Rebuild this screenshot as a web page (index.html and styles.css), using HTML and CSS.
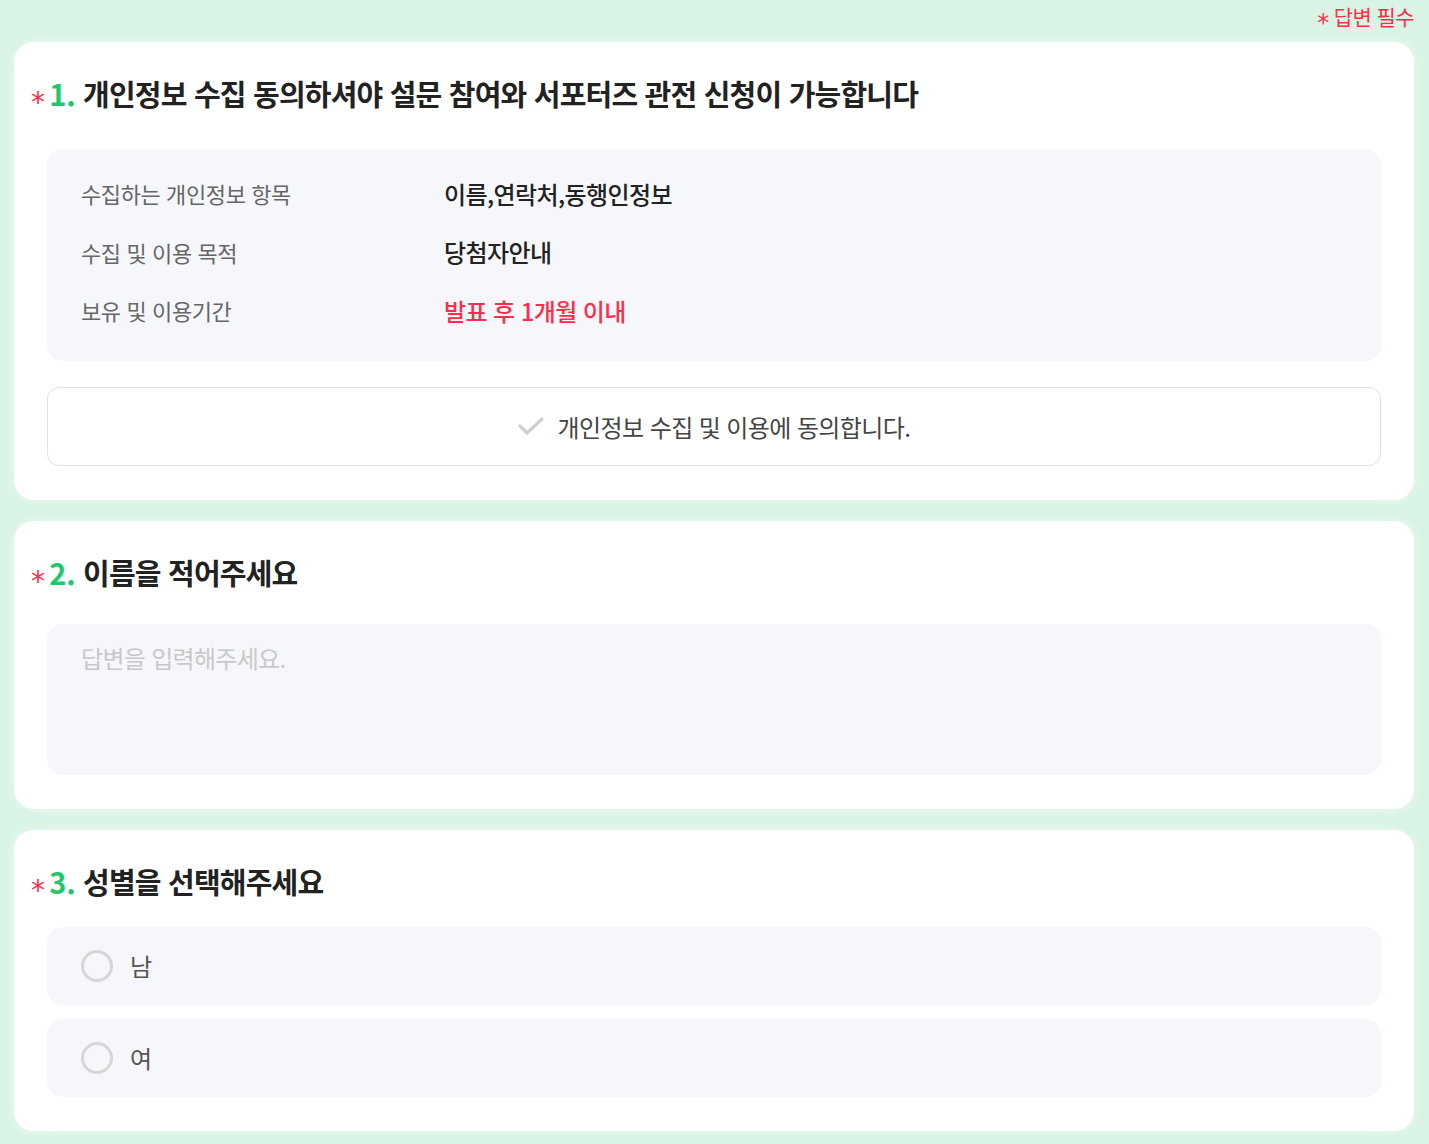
FILE: index.html
```html
<!DOCTYPE html>
<html lang="ko">

<head>
    <meta charset="UTF-8">
    <meta name="viewport" content="width=device-width, initial-scale=1.0">
    <title>설문</title>
    <link rel="stylesheet" href="styles.css">
</head>

<body>
    <div class="survey">
        <div class="required-note"><span class="star">*</span> 답변 필수</div>

        <div class="card">
            <h2 class="q-title q1"><span class="star">*</span><span class="num">1.</span> 개인정보 수집 동의하셔야 설문 참여와 서포터즈 관전 신청이 가능합니다</h2>
            <div class="info-box">
                <div class="info-row">
                    <span class="info-label">수집하는 개인정보 항목</span>
                    <span class="info-value">이름,연락처,동행인정보</span>
                </div>
                <div class="info-row">
                    <span class="info-label">수집 및 이용 목적</span>
                    <span class="info-value">당첨자안내</span>
                </div>
                <div class="info-row">
                    <span class="info-label">보유 및 이용기간</span>
                    <span class="info-value red">발표 후 1개월 이내</span>
                </div>
            </div>
            <button class="agree-btn">
                <svg class="check" width="26" height="20" viewBox="0 0 26 20">
                    <path d="M2 10 L9 17 L24 3" fill="none" stroke="#cfcfcf" stroke-width="3.2" stroke-linecap="round" stroke-linejoin="round"/>
                </svg>
                개인정보 수집 및 이용에 동의합니다.
            </button>
        </div>

        <div class="card">
            <h2 class="q-title q2"><span class="star">*</span><span class="num">2.</span> 이름을 적어주세요</h2>
            <textarea class="answer" placeholder="답변을 입력해주세요."></textarea>
        </div>

        <div class="card">
            <h2 class="q-title q3"><span class="star">*</span><span class="num">3.</span> 성별을 선택해주세요</h2>
            <div class="options">
                <label class="option"><span class="radio"></span>남</label>
                <label class="option"><span class="radio"></span>여</label>
            </div>
        </div>
    </div>
</body>

</html>
```

FILE: styles.css
```css
body {
    margin: 0;
    background-color: #d9f4e5;
    font-family: "Noto Sans CJK KR", "Noto Sans", sans-serif;
    color: #222;
}

.survey {
    padding: 0 15px 13px 14px;
}

.required-note {
    height: 42px;
    text-align: right;
    font-size: 21px;
    line-height: 32px;
    color: #ff2d4b;
    letter-spacing: -0.6px;
}

.star {
    font-family: "DejaVu Sans", sans-serif;
    color: #ff2d4b;
    line-height: 0;
}

.required-note .star {
    font-size: 24px;
    vertical-align: -6px;
}

.card {
    background: #fff;
    border-radius: 20px;
    padding: 31px 33px 34px;
    margin-bottom: 21px;
    box-shadow: 0 0 12px rgba(255, 255, 255, 0.5);
}

.card:last-child {
    margin-bottom: 0;
}

.q-title {
    font-size: 29px;
    line-height: 40px;
    font-weight: 700;
    letter-spacing: -0.8px;
    color: #222;
    margin: 0 0 0 -16px;
}

.q-title .star {
    font-size: 28px;
    font-weight: 400;
    margin-right: 5px;
    vertical-align: -6px;
}

.q-title .num {
    color: #1ec86b;
    letter-spacing: 0;
}

.q1 {
    margin-bottom: 36px;
}

.q2 {
    margin-bottom: 32px;
}

.q3 {
    margin-bottom: 26px;
}

.info-box {
    background: #f6f7fb;
    border-radius: 16px;
    padding: 15px 34px 21px;
}

.info-row {
    display: flex;
    align-items: center;
    height: 58.5px;
}

.info-label {
    width: 363px;
    font-size: 22px;
    letter-spacing: -0.4px;
    color: #666;
}

.info-value {
    font-size: 24px;
    letter-spacing: -0.6px;
    color: #222;
    font-weight: 500;
}

.info-value.red {
    color: #ff2d4b;
}

.agree-btn {
    display: flex;
    align-items: center;
    justify-content: center;
    gap: 14px;
    width: 100%;
    height: 79px;
    margin-top: 26px;
    background: #fff;
    border: 1px solid #e3e3e3;
    border-radius: 12px;
    font-family: inherit;
    font-size: 24px;
    letter-spacing: -0.6px;
    color: #444;
    cursor: pointer;
}

.answer {
    display: block;
    width: 100%;
    height: 151px;
    box-sizing: border-box;
    border: none;
    border-radius: 16px;
    background: #f6f7fb;
    padding: 16px 34px;
    font-family: inherit;
    font-size: 24px;
    letter-spacing: -0.7px;
    resize: none;
    outline: none;
}

.answer::placeholder {
    color: #c8c8c8;
}

.options {
    display: flex;
    flex-direction: column;
    gap: 14px;
}

.option {
    display: flex;
    align-items: center;
    gap: 17px;
    height: 78px;
    padding: 0 34px;
    background: #f6f7fb;
    border-radius: 16px;
    font-size: 24px;
    color: #555;
    cursor: pointer;
}

.radio {
    width: 26px;
    height: 26px;
    border: 3px solid #d6d6d6;
    border-radius: 50%;
}
```
